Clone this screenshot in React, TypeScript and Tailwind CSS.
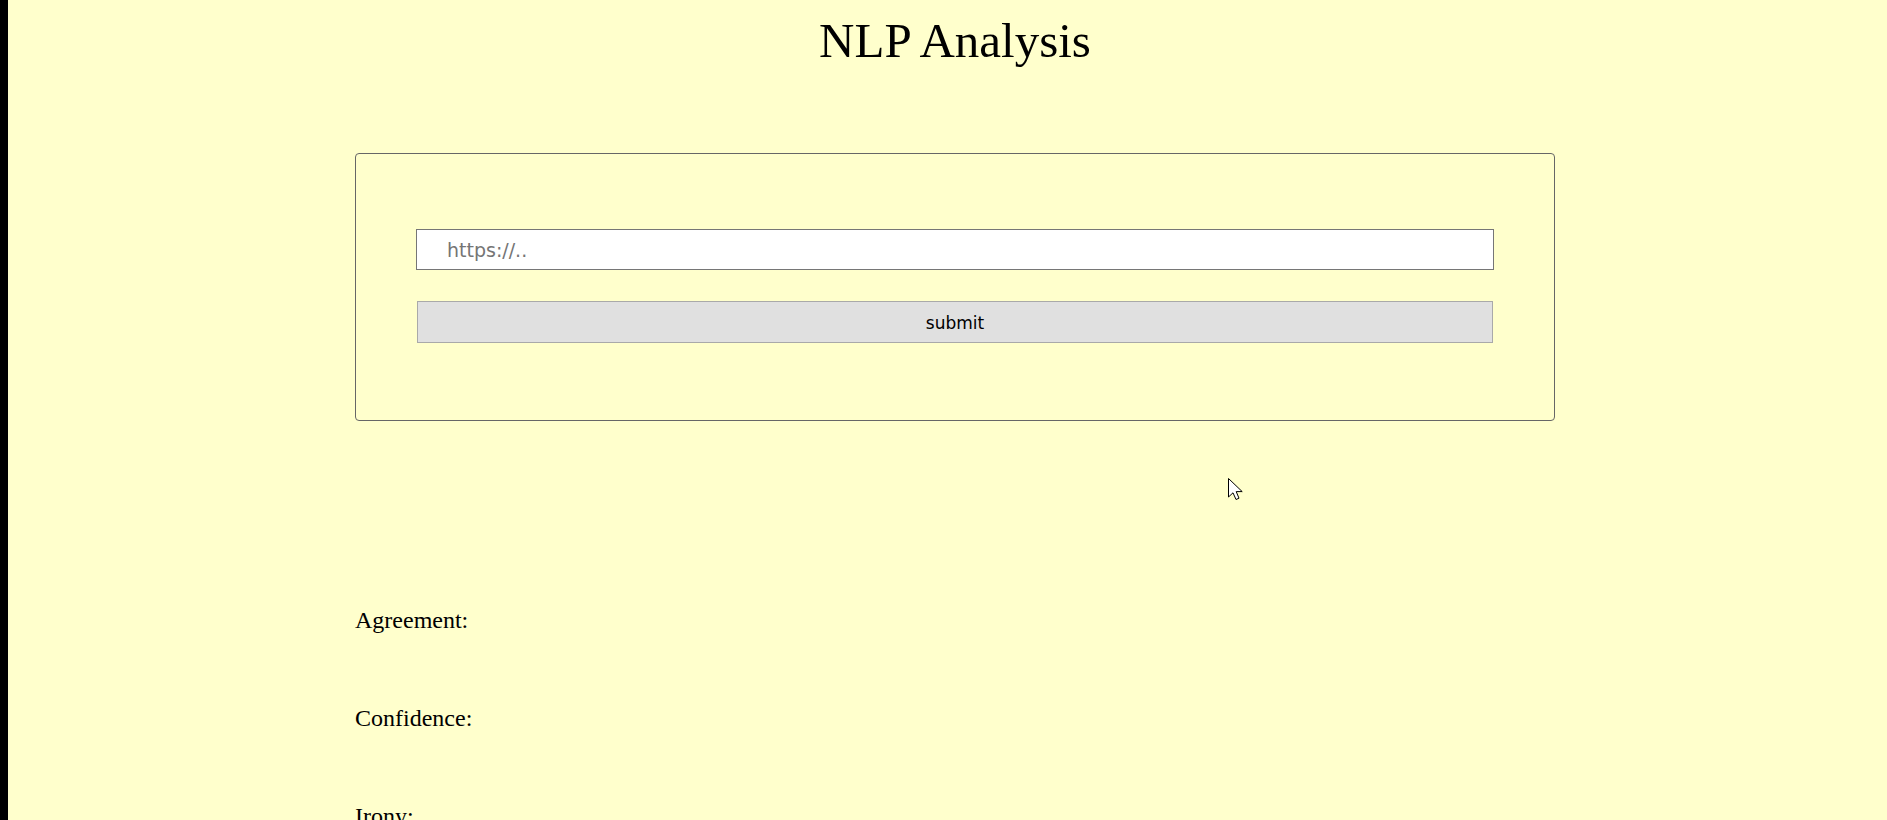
export default function App() {
  return (
    <div className="relative flex min-h-[820px] bg-[#ffffcc] font-['Liberation_Serif',serif] text-black">
      <div className="w-2 shrink-0 bg-black" />

      <main className="ml-[347px] w-[1200px]">
        <h1 className="pt-[13px] text-center text-[49px] leading-[55px] font-normal">
          NLP Analysis
        </h1>

        <form
          className="mt-[85px] flex h-[268px] flex-col rounded-[4px] border border-[#666666] px-[60px] pt-[75px]"
          onSubmit={(e) => e.preventDefault()}
        >
          <input
            type="text"
            placeholder="https://.."
            className="h-[41px] w-[1078px] border border-[#767676] bg-white pl-[30px] font-['DejaVu_Sans',sans-serif] text-[19px] text-black outline-none placeholder:text-[#757575]"
          />
          <button
            type="submit"
            className="mt-[31px] ml-px h-[42px] w-[1076px] border border-[#a9a9a9] bg-[#e0e0e0] pt-[3px] font-['DejaVu_Sans',sans-serif] text-[17px] text-black"
          >
            submit
          </button>
        </form>

        <div className="mt-[186px] flex flex-col gap-[71px] text-[24px] leading-[27px]">
          <p>Agreement:</p>
          <p>Confidence:</p>
          <p>Irony:</p>
        </div>
      </main>

      <svg
        className="absolute left-[1228px] top-[478px]"
        width="18"
        height="26"
        viewBox="0 0 18 26"
      >
        <path
          d="M0.5 0.5 L0.5 19 L5 14.8 L8 21.5 L11 20.2 L8.2 13.6 L14.2 13.6 Z"
          fill="#ffffff"
          stroke="#000000"
          strokeWidth="1"
          strokeLinejoin="miter"
        />
      </svg>
    </div>
  );
}
